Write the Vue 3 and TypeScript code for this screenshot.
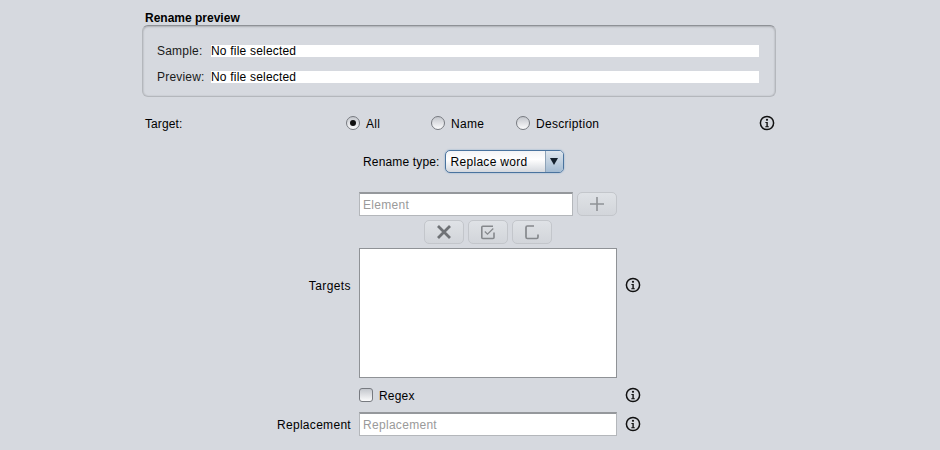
<template>
  <div class="page">
    <div class="section-title">Rename preview</div>
    <div class="preview-box">
      <div v-for="row in previewRows" :key="row" class="preview-row">
        <span class="preview-label">{{ row }}:</span>
        <span class="preview-value">No file selected</span>
      </div>
    </div>

    <div class="target-row">
      <span class="target-label">Target:</span>
      <div class="radios">
        <label v-for="opt in targets" :key="opt" class="radio-item">
          <span class="radio" :class="{ checked: opt === 'All' }"></span>
          <span class="radio-text">{{ opt }}</span>
        </label>
      </div>
      <svg class="info" viewBox="0 0 16 16"><use href="#info-icon" /></svg>
    </div>

    <div class="type-row">
      <span class="type-label">Rename type:</span>
      <div class="combo">
        <span class="combo-text">Replace word</span>
        <span class="combo-arrow"><i></i></span>
      </div>
    </div>

    <div class="form">
      <div></div>
      <div class="element-row">
        <div class="input element-input placeholder">Element</div>
        <button class="tool-btn">
          <svg width="16" height="16" viewBox="0 0 16 16"><path d="M8 1v14M1 8h14" stroke="#8f9296" stroke-width="1.6" fill="none" /></svg>
        </button>
      </div>
      <div></div>

      <div></div>
      <div class="tools-row">
        <button class="tool-btn">
          <svg width="16" height="16" viewBox="0 0 16 16"><path d="M2 2l12 12M14 2L2 14" stroke="#6f7276" stroke-width="2.8" fill="none" /></svg>
        </button>
        <button class="tool-btn">
          <svg width="16" height="16" viewBox="0 0 16 16"><path d="M14 8.500V13.500q0 1-1 1H2.800q-1 0-1-1V3.200q0-1 1-1H13" stroke="#85888c" stroke-width="1.6" fill="none" /><path d="M4.800 7.500l2.700 2.700 5.800-5.700" stroke="#85888c" stroke-width="1.2" fill="none" /></svg>
        </button>
        <button class="tool-btn">
          <svg width="16" height="16" viewBox="0 0 16 16"><path d="M14 10.500v2.600q0 1.400-1.400 1.400H3.400Q2 14.500 2 13.100V3.400Q2 2 3.400 2H10" stroke="#85888c" stroke-width="1.7" fill="none" /></svg>
        </button>
      </div>
      <div></div>

      <div class="form-label targets-label">Targets</div>
      <div class="list-box"></div>
      <svg class="info targets-info" viewBox="0 0 16 16"><use href="#info-icon" /></svg>

      <div></div>
      <label class="check-row"><span class="checkbox"></span><span class="check-text">Regex</span></label>
      <svg class="info" viewBox="0 0 16 16"><use href="#info-icon" /></svg>

      <div class="form-label">Replacement</div>
      <div class="input placeholder">Replacement</div>
      <svg class="info" viewBox="0 0 16 16"><use href="#info-icon" /></svg>
    </div>

    <svg width="0" height="0" class="defs">
      <symbol id="info-icon" viewBox="0 0 16 16">
        <circle cx="8" cy="8" r="6.6" fill="none" stroke="#111" stroke-width="1.5" />
        <circle cx="8" cy="4.8" r="1.1" fill="#111" />
        <path d="M6.4 7h2.4v4.2h1v1H6.3v-1h1.1V8H6.4z" fill="#111" />
      </symbol>
    </svg>
  </div>
</template>

<script setup lang="ts">
const previewRows = ['Sample', 'Preview']
const targets = ['All', 'Name', 'Description']
</script>

<style>
body {
  background: #d6d9df;
}
</style>

<style scoped>
.page {
  width: 940px;
  height: 450px;
  box-sizing: border-box;
  padding: 11px 0 0 142px;
  background: #d6d9df;
  color: #000;
  font-family: "Liberation Sans", Arial, sans-serif;
  font-size: 12px;
  overflow: hidden;
}

.section-title {
  height: 14px;
  line-height: 14px;
  padding-left: 3px;
  font-weight: bold;
}

.preview-box {
  box-sizing: border-box;
  width: 634px;
  height: 72px;
  padding: 19px 16px 0 14px;
  border: 1px solid #b4b7bc;
  border-top-color: #8e9196;
  border-radius: 6px;
  box-shadow: inset 0 1px 2px rgba(0, 0, 0, 0.16), inset 0 0 2px rgba(0, 0, 0, 0.12);
}

.preview-row {
  display: flex;
  height: 12px;
  line-height: 12px;
  margin-bottom: 14px;
}

.preview-label {
  width: 54px;
  color: #1a1a1a;
  letter-spacing: 0.2px;
}

.preview-value {
  flex: 1;
  background: #fff;
  letter-spacing: 0.2px;
}

.target-row {
  display: flex;
  align-items: center;
  height: 16px;
  margin-top: 18px;
  padding-left: 3px;
  width: 631px;
  letter-spacing: 0.3px;
}

.target-label {
  width: 201px;
  padding-top: 2px;
  letter-spacing: 0.1px;
}

.radios {
  display: flex;
  width: 413px;
}

.radio-item {
  display: flex;
  align-items: center;
  gap: 6px;
  width: 85px;
  white-space: nowrap;
}

.radio-text {
  padding-top: 2px;
}

.radio {
  box-sizing: border-box;
  width: 14px;
  height: 14px;
  border-radius: 50%;
  border: 1px solid #777a80;
  background: linear-gradient(#c4c7cd, #fbfbfc);
  display: flex;
  align-items: center;
  justify-content: center;
}

.radio.checked::after {
  content: "";
  width: 6px;
  height: 6px;
  border-radius: 50%;
  background: #111;
}

.info {
  width: 16px;
  height: 16px;
  flex: none;
}

.defs {
  position: absolute;
}

.type-row {
  display: flex;
  align-items: center;
  gap: 5px;
  height: 24px;
  margin-top: 18px;
  padding-left: 221px;
}

.type-label {
  padding-top: 2px;
  letter-spacing: 0.15px;
}

.combo {
  box-sizing: border-box;
  display: flex;
  width: 119px;
  height: 23px;
  border: 1px solid #4a739e;
  border-radius: 5px;
  box-shadow: 0 0 2px #8aaccd;
  background: linear-gradient(#f3f4f6, #fff 40%, #d4d8de);
  overflow: hidden;
}

.combo-text {
  flex: 1;
  line-height: 21px;
  padding: 1px 0 0 5px;
  letter-spacing: 0.3px;
}

.combo-arrow {
  width: 17px;
  border-left: 1px solid #8ea3b8;
  background: linear-gradient(#dfe6ed, #a3bbd2);
  display: flex;
  align-items: center;
  justify-content: center;
}

.combo-arrow i {
  width: 0;
  height: 0;
  border-left: 4px solid transparent;
  border-right: 4px solid transparent;
  border-top: 7px solid #14202c;
}

.form {
  display: grid;
  grid-template-columns: 209px 258px 16px;
  column-gap: 8px;
  row-gap: 4px;
  margin-top: 19px;
  align-items: center;
}

.element-row {
  display: flex;
  gap: 4px;
}

.element-input {
  width: 214px;
}

.input {
  box-sizing: border-box;
  height: 24px;
  line-height: 21px;
  padding: 1px 0 0 3px;
  background: #fff;
  border: 1px solid #b4b7bb;
  border-top: 2px solid #95989c;
  letter-spacing: 0.3px;
}

.placeholder {
  color: #9a9a9a;
}

.tool-btn {
  box-sizing: border-box;
  width: 40px;
  height: 24px;
  padding: 0;
  border: 1px solid #c3c6cb;
  border-radius: 5px;
  background: linear-gradient(#dfe2e6, #d2d5da);
  display: flex;
  align-items: center;
  justify-content: center;
}

.tools-row {
  display: flex;
  justify-content: center;
  gap: 4px;
}

.form-label {
  text-align: right;
  letter-spacing: 0.3px;
  padding-top: 2px;
}

.targets-label {
  align-self: start;
  margin-top: 29px;
  letter-spacing: 0.4px;
}

.targets-info {
  align-self: start;
  margin-top: 29px;
}

.list-box {
  box-sizing: border-box;
  height: 130px;
  background: #fff;
  border: 1px solid #8f9296;
}

.check-row {
  display: flex;
  align-items: center;
  gap: 6px;
  height: 26px;
  letter-spacing: 0.2px;
}

.check-text {
  padding-top: 2px;
}

.checkbox {
  box-sizing: border-box;
  width: 14px;
  height: 14px;
  border: 1px solid #777a80;
  border-radius: 3px;
  background: linear-gradient(#c4c7cd, #fbfbfc);
}
</style>
